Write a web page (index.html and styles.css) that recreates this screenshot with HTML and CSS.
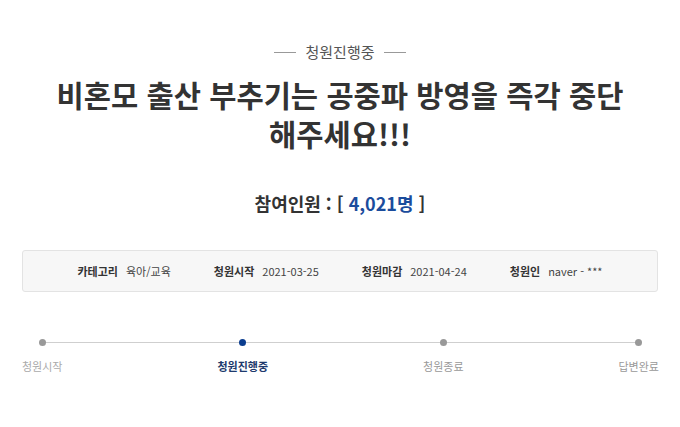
FILE: index.html
```html
<!DOCTYPE html>
<html lang="ko">
<head>
<meta charset="utf-8">
<link rel="stylesheet" href="styles.css">
</head>
<body>
<main class="petition">
  <div class="status"><span>청원진행중</span></div>
  <h1 class="title">비혼모 출산 부추기는 공중파 방영을 즉각 중단<br>해주세요!!!</h1>
  <p class="count">참여인원 : [ <span class="num">4,021명</span> ]</p>
  <div class="info">
    <div class="info-item"><span class="label">카테고리</span><span class="value">육아/교육</span></div>
    <div class="info-item"><span class="label">청원시작</span><span class="value">2021-03-25</span></div>
    <div class="info-item"><span class="label">청원마감</span><span class="value">2021-04-24</span></div>
    <div class="info-item"><span class="label">청원인</span><span class="value">naver - ***</span></div>
  </div>
  <ol class="progress">
    <li class="step done"><span class="dot"></span><span class="step-label">청원시작</span></li>
    <li class="step current"><span class="dot"></span><span class="step-label">청원진행중</span></li>
    <li class="step"><span class="dot"></span><span class="step-label">청원종료</span></li>
    <li class="step"><span class="dot"></span><span class="step-label">답변완료</span></li>
  </ol>
</main>
</body>
</html>
```
FILE: styles.css
```css
html, body {
  margin: 0;
  padding: 0;
  background: #fff;
}
body {
  font-family: "Noto Sans CJK KR", "Noto Sans", sans-serif;
  color: #333;
}
.petition {
  padding-top: 42px;
}
.status {
  display: flex;
  justify-content: center;
  align-items: center;
  gap: 9px;
  font-size: 15px;
  line-height: 20px;
  color: #555;
}
.status::before,
.status::after {
  content: "";
  width: 22px;
  height: 1px;
  background: #999;
}
.title {
  margin: 13px 0 0;
  text-align: center;
  font-size: 29.6px;
  line-height: 39px;
  font-weight: 700;
  color: #333;
}
.count {
  margin: 38px 0 0;
  text-align: center;
  font-size: 18px;
  line-height: 24px;
  font-weight: 700;
  color: #333;
}
.count .num {
  color: #1b4c9c;
}
.info {
  margin: 35px 22px 0;
  height: 40px;
  border: 1px solid #e3e3e3;
  border-radius: 3px;
  background: #f7f7f7;
  display: flex;
  justify-content: center;
  align-items: center;
  gap: 43px;
  font-size: 11px;
  color: #444;
}
.info-item {
  display: flex;
  gap: 8px;
}
.info-item .label {
  font-weight: 700;
  color: #333;
}
.progress {
  list-style: none;
  margin: 47px 21px 0 22px;
  padding: 0;
  position: relative;
  display: flex;
  justify-content: space-between;
}
.progress::before {
  content: "";
  position: absolute;
  left: 20px;
  right: 20px;
  top: 3px;
  height: 1px;
  background: #cfcfcf;
}
.step {
  display: flex;
  flex-direction: column;
  align-items: center;
  gap: 12px;
  font-size: 11px;
  line-height: 16px;
  color: #999;
}
.dot {
  position: relative;
  width: 7px;
  height: 7px;
  border-radius: 50%;
  background: #999;
}
.step.done .step-label {
  color: #aaa;
}
.step.current .dot {
  background: #0b3d8f;
}
.step.current .step-label {
  color: #1e3a6d;
  font-weight: 700;
}
```
